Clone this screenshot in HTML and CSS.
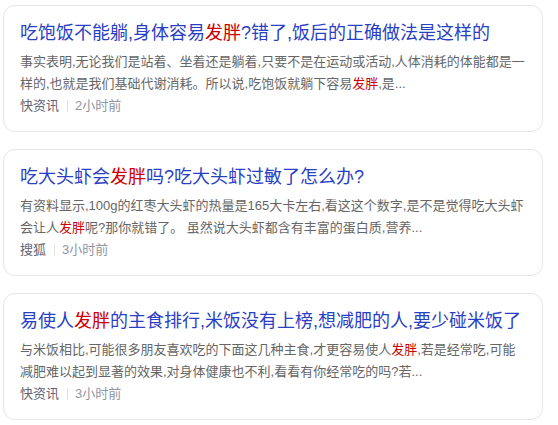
FILE: index.html
```html
<!DOCTYPE html>
<html lang="zh-CN">
<head>
<meta charset="utf-8">
<title>发胖</title>
<link rel="stylesheet" href="styles.css">
</head>
<body>
<div class="list">
  <div class="card">
    <a class="title" href="#">吃饱饭不能躺,身体容易<em>发胖</em>?错了,饭后的正确做法是这样的</a>
    <p class="snippet">事实表明,无论我们是站着、坐着还是躺着,只要不是在运动或活动,人体消耗的体能都是一样的,也就是我们基础代谢消耗。所以说,吃饱饭就躺下容易<em>发胖</em>,是...</p>
    <div class="meta"><span class="source">快资讯</span><span class="sep"></span><span class="time">2小时前</span></div>
  </div>
  <div class="card">
    <a class="title" href="#">吃大头虾会<em>发胖</em>吗?吃大头虾过敏了怎么办?</a>
    <p class="snippet">有资料显示,100g的红枣大头虾的热量是165大卡左右,看这这个数字,是不是觉得吃大头虾会让人<em>发胖</em>呢?那你就错了。 虽然说大头虾都含有丰富的蛋白质,营养...</p>
    <div class="meta"><span class="source">搜狐</span><span class="sep"></span><span class="time">3小时前</span></div>
  </div>
  <div class="card">
    <a class="title" href="#">易使人<em>发胖</em>的主食排行,米饭没有上榜,想减肥的人,要少碰米饭了</a>
    <p class="snippet">与米饭相比,可能很多朋友喜欢吃的下面这几种主食,才更容易使人<em>发胖</em>,若是经常吃,可能减肥难以起到显著的效果,对身体健康也不利,看看有你经常吃的吗?若...</p>
    <div class="meta"><span class="source">快资讯</span><span class="sep"></span><span class="time">3小时前</span></div>
  </div>
</div>
</body>
</html>
```
FILE: styles.css
```css
html, body {
  margin: 0;
  padding: 0;
  background: #fff;
}
body {
  font-family: "Liberation Sans", Arial, "Noto Sans CJK SC", sans-serif;
}
.list {
  padding: 5px 0 0 3px;
  width: 540px;
  display: flex;
  flex-direction: column;
  gap: 17px;
}
.card {
  border: 1px solid #e6e6e6;
  border-radius: 12px;
  padding: 14px 16px;
  display: flex;
  flex-direction: column;
}
.title {
  font-size: 18px;
  line-height: 26px;
  color: #2a40c4;
  text-decoration: none;
  margin-bottom: 5px;
}
em {
  font-style: normal;
  color: #cc0000;
}
.snippet {
  margin: 0;
  font-size: 13px;
  line-height: 22px;
  color: #666;
}
.meta {
  display: flex;
  align-items: center;
  font-size: 13px;
  line-height: 22px;
  height: 22px;
}
.source {
  color: #626675;
}
.sep {
  width: 1px;
  height: 12px;
  background: #e0e0e0;
  margin: 0 7px 0 8px;
}
.time {
  color: #9195a3;
}
```
